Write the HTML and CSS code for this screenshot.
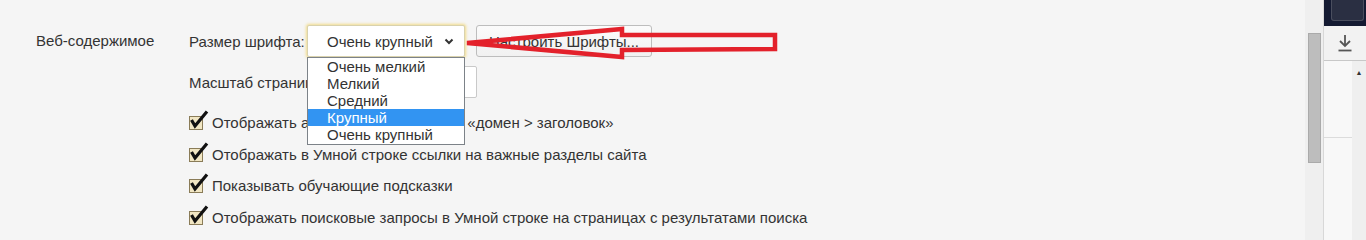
FILE: index.html
```html
<!DOCTYPE html>
<html lang="ru">
<head>
<meta charset="utf-8">
<title>Настройки</title>
<link rel="stylesheet" href="styles.css">
</head>
<body>
<div class="app">
  <main class="content">
    <section class="group">
      <div class="group-title">Веб-содержимое</div>
      <div class="group-body">
        <div class="row">
          <span class="label label-font">Размер шрифта:</span>
          <div class="select-wrap">
            <div class="select focused">
              <span class="select-text">Очень крупный</span>
              <svg class="chev" width="10" height="7" viewBox="0 0 10 7"><path d="M1.5 1.5 L5 5 L8.5 1.5" fill="none" stroke="#333" stroke-width="2"/></svg>
            </div>
            <ul class="dropdown">
              <li>Очень мелкий</li>
              <li>Мелкий</li>
              <li>Средний</li>
              <li class="active">Крупный</li>
              <li>Очень крупный</li>
            </ul>
          </div>
          <button class="btn">Настроить Шрифты...</button>
        </div>
        <div class="row">
          <span class="label label-zoom">Масштаб страницы:</span>
          <div class="select select-zoom"><span class="select-text">100%</span></div>
        </div>
        <div class="checks">
          <label class="check"><span class="cb"><svg width="22" height="20" viewBox="0 0 22 20"><rect x="1.5" y="6.5" width="13" height="13" fill="#f1e6c3" stroke="#8a7c58"/><path d="M3.5 10 L7 16 L19 1.5" fill="none" stroke="#111" stroke-width="3.2" stroke-linejoin="miter"/></svg></span>Отображать адрес страницы в виде «домен &gt; заголовок»</label>
          <label class="check"><span class="cb"><svg width="22" height="20" viewBox="0 0 22 20"><rect x="1.5" y="6.5" width="13" height="13" fill="#f1e6c3" stroke="#8a7c58"/><path d="M3.5 10 L7 16 L19 1.5" fill="none" stroke="#111" stroke-width="3.2" stroke-linejoin="miter"/></svg></span>Отображать в Умной строке ссылки на важные разделы сайта</label>
          <label class="check"><span class="cb"><svg width="22" height="20" viewBox="0 0 22 20"><rect x="1.5" y="6.5" width="13" height="13" fill="#f1e6c3" stroke="#8a7c58"/><path d="M3.5 10 L7 16 L19 1.5" fill="none" stroke="#111" stroke-width="3.2" stroke-linejoin="miter"/></svg></span>Показывать обучающие подсказки</label>
          <label class="check"><span class="cb"><svg width="22" height="20" viewBox="0 0 22 20"><rect x="1.5" y="6.5" width="13" height="13" fill="#f1e6c3" stroke="#8a7c58"/><path d="M3.5 10 L7 16 L19 1.5" fill="none" stroke="#111" stroke-width="3.2" stroke-linejoin="miter"/></svg></span>Отображать поисковые запросы в Умной строке на страницах с результатами поиска</label>
        </div>
      </div>
    </section>
    <svg class="arrow" width="800" height="70" viewBox="0 0 800 70">
      <path d="M467 43 L622 29 L622 35 L775 35 L775 49 L622 50 L622 57 Z" fill="none" stroke="#e3212b" stroke-width="4.5" stroke-linejoin="miter"/>
    </svg>
  </main>
  <div class="scrollbar"><div class="thumb"></div></div>
  <aside class="side">
    <div class="side-top"><div class="side-tab"></div></div>
    <div class="side-dl">
      <svg width="18" height="18" viewBox="0 0 18 18"><path d="M9 1 V11.5 M4 7 L9 12 L14 7" fill="none" stroke="#555" stroke-width="1.8"/><path d="M2.5 16.5 H15.5" stroke="#555" stroke-width="1.8"/></svg>
    </div>
    <div class="side-body">
      <div class="side-list"><div class="side-sep"></div></div>
      <div class="side-scroll"><span class="up">▲</span></div>
    </div>
  </aside>
</div>
</body>
</html>
```

FILE: styles.css
```css
html, body {
  margin: 0;
  padding: 0;
  height: 100%;
  background: #f5f5f5;
  font-family: "Liberation Sans", Arial, sans-serif;
  color: #333;
}
.app {
  display: flex;
  height: 240px;
  overflow: hidden;
  position: relative;
}
.content {
  flex: 1;
  min-width: 0;
  position: relative;
}
.group {
  display: flex;
  padding-top: 25px;
}
.group-title {
  flex: none;
  width: 189px;
  box-sizing: border-box;
  padding-left: 36px;
  font-size: 15px;
  line-height: 32px;
}
.group-body {
  display: flex;
  flex-direction: column;
  flex: none;
}
.row {
  display: flex;
  align-items: center;
  height: 32px;
  margin-bottom: 9px;
}
.label {
  font-size: 15px;
  flex: none;
  white-space: nowrap;
}
.label-font { width: 118px; }
.label-zoom { width: 130px; }
.select-wrap {
  position: relative;
  flex: none;
}
.select {
  flex: none;
  width: 158px;
  height: 32px;
  box-sizing: border-box;
  background: #fff;
  border: 1px solid #d9d2ad;
  border-radius: 2px;
  display: flex;
  align-items: center;
  padding-left: 19px;
  padding-right: 10px;
  font-size: 15px;
  color: #333;
}
.select.focused {
  box-shadow: 0 0 3px 1px #f2dc8a;
}
.select-text { flex: 1; }
.chev { margin-top: 1px; }
.select-zoom {
  border-color: #c9c9c9;
}
.dropdown {
  position: absolute;
  left: 0;
  top: 32px;
  width: 158px;
  box-sizing: border-box;
  margin: 0;
  padding: 0 0 1px;
  list-style: none;
  background: #fff;
  border: 1px solid #7c8288;
  z-index: 5;
  font-size: 15px;
  line-height: 17px;
}
.dropdown li {
  padding-left: 19px;
  color: #333;
}
.dropdown li.active {
  background: #3294f2;
  color: #fff;
}
.btn {
  flex: none;
  margin-left: 11px;
  width: 176px;
  height: 32px;
  box-sizing: border-box;
  background: linear-gradient(#fbfbfb, #f1f1f1);
  border: 1px solid #bdbdbd;
  border-radius: 3px;
  font-family: "Liberation Sans", Arial, sans-serif;
  font-size: 15px;
  color: #333;
  padding: 0;
}
.checks {
  display: flex;
  flex-direction: column;
  margin-top: 0;
}
.check {
  display: flex;
  align-items: center;
  height: 31.5px;
  font-size: 15px;
  color: #333;
  white-space: nowrap;
}
.cb {
  width: 24px;
  height: 20px;
  margin-top: -5px;
  margin-left: -1px;
  flex: none;
}
.cb svg { display: block; }
.arrow {
  position: absolute;
  left: 0;
  top: 0;
  z-index: 10;
  pointer-events: none;
}
.scrollbar {
  flex: none;
  width: 18px;
  background: #efefef;
  position: relative;
}
.thumb {
  margin: 33px 0 0 3px;
  width: 13px;
  height: 130px;
  background: #bdbdbd;
  border: 1px solid #aaa;
  box-sizing: border-box;
}
.side {
  flex: none;
  width: 43px;
  display: flex;
  flex-direction: column;
  border-left: 1px solid #d8d8d8;
  box-sizing: border-box;
}
.side-top {
  height: 26px;
  background: #141a32;
  display: flex;
  justify-content: center;
}
.side-tab {
  width: 31px;
  height: 20px;
  margin-left: 4px;
  background: #2a2f42;
  border: 1px solid #4a4e5e;
  border-top: none;
  border-radius: 0 0 3px 3px;
}
.side-dl {
  height: 34px;
  background: #f2f2f2;
  border-bottom: 1px solid #c8c8c8;
  display: flex;
  align-items: center;
  justify-content: center;
}
.side-body {
  flex: 1;
  display: flex;
}
.side-list {
  flex: 1;
  background: #f8f8f8;
}
.side-sep {
  margin-top: 76px;
  height: 1px;
  background: #dcdcdc;
}
.side-scroll {
  width: 14px;
  background: #efefef;
  text-align: center;
}
.up {
  font-size: 7px;
  color: #333;
  line-height: 20px;
}
```
